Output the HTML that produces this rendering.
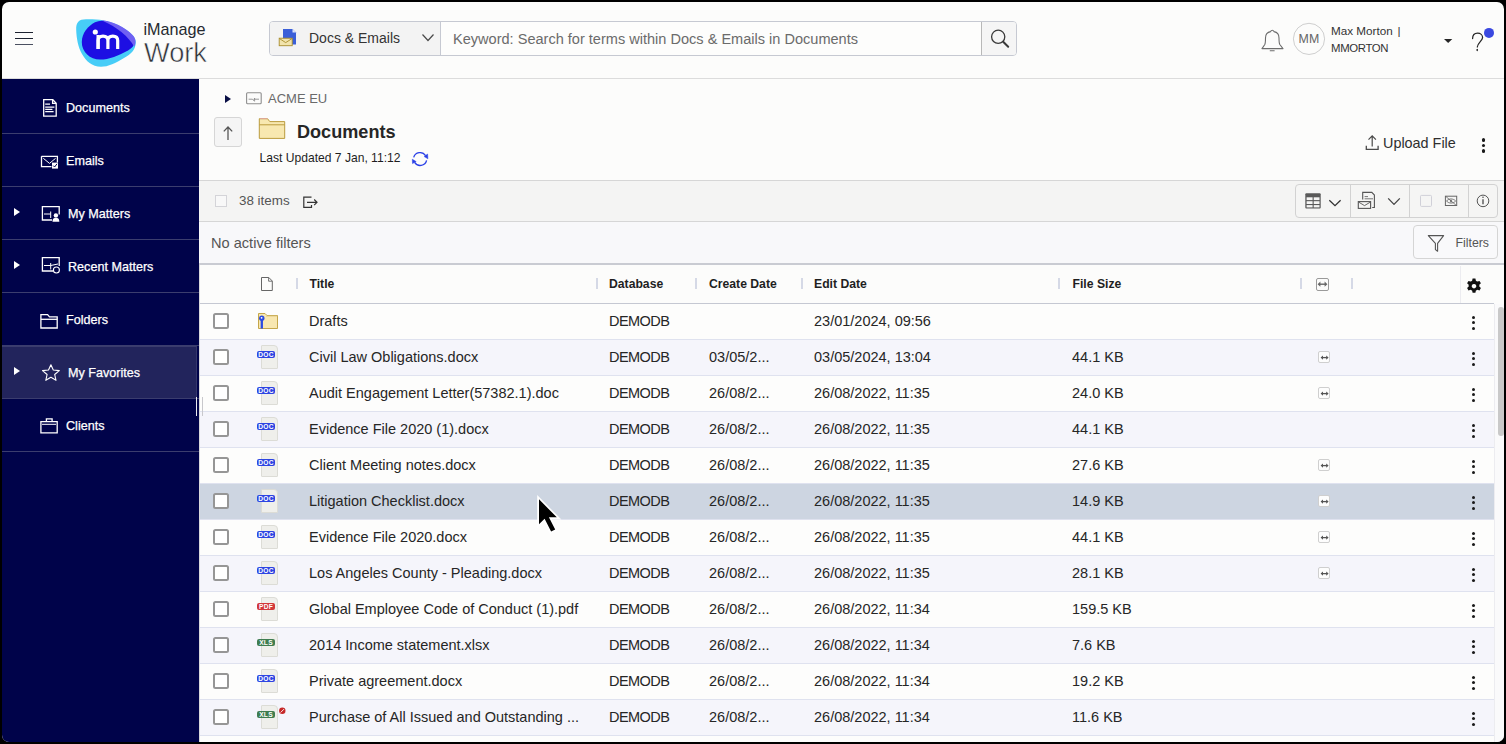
<!DOCTYPE html>
<html><head><meta charset="utf-8">
<style>
*{box-sizing:border-box;margin:0;padding:0}
html,body{width:1506px;height:744px;overflow:hidden;background:#000}
body{font-family:"Liberation Sans",sans-serif;color:#262626;position:relative}
.app{position:absolute;left:2px;top:2px;width:1502px;height:740px;background:#fcfcfb;border-radius:7px;overflow:hidden}
.pg{position:absolute;left:-2px;top:-2px;width:1506px;height:744px}
.a{position:absolute;white-space:nowrap}
svg{position:absolute;overflow:visible}
.hdrline{position:absolute;left:0;top:78px;width:1506px;height:1px;background:#dcdcdc}
.side{position:absolute;left:0;top:79px;width:199px;height:665px;background:#00034a}
.nav{position:absolute;left:0;width:199px;height:53px;border-bottom:1px solid #3b3d6e;color:#fff;font-size:12.6px}
.nav .t{position:absolute;left:66px;top:0;line-height:53px;white-space:nowrap;-webkit-text-stroke:0.25px #fff}
.nav .tri{position:absolute;left:13.8px;top:21px;width:0;height:0;border-left:6.2px solid #fff;border-top:4.7px solid transparent;border-bottom:4.7px solid transparent}
.sel{background:#22245c}
.row{position:absolute;left:200px;width:1294px;height:36px;border-bottom:1px solid #dfe2ef;background:#fdfdfc}
.row.alt{background:#f5f5fb}
.row.hov{background:#cdd5e1}
.row .cb{position:absolute;left:13.2px;top:9.2px;width:15.6px;height:15.6px;border:2px solid #969696;border-radius:2.5px;background:#fff}
.row .pgic{position:absolute;left:60.5px;top:5.3px;width:17.5px;height:23.3px;background:#efefeb;border:1px solid #dcdcd6;border-radius:1px 4px 1px 1px}
.row .bdg{position:absolute;left:57px;top:10.5px;width:18px;height:7.6px;border-radius:2px;color:#fff;font-size:6.6px;font-weight:bold;line-height:7.6px;text-align:center;letter-spacing:0.3px}
.row .c{position:absolute;top:0;line-height:34px;font-size:14.5px;color:#262626;white-space:nowrap}
.t1{left:109px}.t2{left:409px}.t3{left:509px}.t4{left:614px}.t5{left:872px}
.row .sy{position:absolute;left:1118.3px;top:11.3px;width:11.4px;height:11.4px;border:1px solid #cfcfcf;border-radius:2px;background:#fdfdfd}
.row .sy svg{left:-1px;top:-1px}
.kb{position:absolute;left:1271.7px;top:11.5px;width:3.4px;height:15px}
.kb i{position:absolute;left:0;width:3.4px;height:3.4px;border-radius:50%;background:#1a1a1a}
.th{position:absolute;top:265px;font-size:12.2px;font-weight:bold;color:#1f1f1f;line-height:16px;white-space:nowrap}
.sep{position:absolute;top:278px;width:2px;height:11px;background:#d5d9e6}
</style></head><body>
<div class="app"><div class="pg">
  <!-- HEADER -->
  <div class="hdrline"></div>
  <div class="a" style="left:15px;top:31.5px;width:18px;height:1.4px;background:#1c2230"></div>
  <div class="a" style="left:15px;top:37.5px;width:18px;height:1.4px;background:#1c2230"></div>
  <div class="a" style="left:15px;top:43.5px;width:18px;height:1.4px;background:#4a5060"></div>
  <svg style="left:0;top:0" width="1" height="1">
    <path d="M76.2,30 C75.8,22 79,19.3 86,19.2 C97,19 108,20 118,25 C128,30 135.8,36 135.8,42 C135.8,50 131,54 124,58 C116,63 108,66.8 101,66.8 C92,66.8 86,61 82,54 C78,47 76.5,38 76.2,30 Z" fill="#47cdf7"/>
    <path d="M81.8,42 C81.8,33 88,26 95,22.2 C99,20.3 103,20.2 107,21.6 C118,26 130,35 133.6,42 C135,45 132,48 128,50.5 C119,55.5 109,59.6 100,59.6 C90,59.6 81.8,52 81.8,42 Z" fill="#1d0fe3"/>
    <path d="M101.5,20.3 C112,20.5 126,28 132.5,35 C136,38.5 136.4,43 134.2,46.8 C129,37 117,27 101.5,20.3 Z" fill="#7060f2"/>
    <circle cx="95.3" cy="32" r="2.6" fill="#fff"/>
    <path d="M98.1,49 V40.6 Q98.1,36.2 103,36.2 Q107.9,36.2 107.9,40.6 V49 M107.9,40.6 Q107.9,36.2 112.8,36.2 Q117.7,36.2 117.7,40.6 V49" stroke="#fff" stroke-width="3.2" fill="none"/>
    <path d="M98.1,49 V35" stroke="#fff" stroke-width="3.2"/>
  </svg>
  <div class="a" style="left:143.5px;top:19.2px;font-size:16.2px;line-height:20px;color:#262a30">iManage</div>
  <div class="a" style="left:144px;top:36.5px;font-size:27.2px;line-height:31px;color:#2d3036;-webkit-text-stroke:0.55px #fcfcfb">Work</div>
  <!-- search -->
  <div class="a" style="left:269px;top:21px;width:748px;height:35px;border:1px solid #c6c9d2;border-radius:4px;background:#fdfdfc"></div>
  <div class="a" style="left:270px;top:22px;width:171px;height:33px;background:#f3f3f3;border-right:1px solid #c6c9d2;border-radius:3px 0 0 3px"></div>
  <div class="a" style="left:981px;top:22px;width:35px;height:33px;background:#f5f5f5;border-left:1px solid #b8b8b8;border-radius:0 3px 3px 0"></div>
  <svg style="left:0;top:0" width="1" height="1">
    <path d="M283,29 H292.5 L296,32.5 V44.6 H283 Z" fill="#3b5fd8"/>
    <path d="M292.5,29 V32.5 H296 Z" fill="#dfe6fb"/>
    <rect x="279.2" y="38.2" width="13" height="7.5" fill="#f2e4ac" stroke="#a98d2c" stroke-width="0.9"/>
    <path d="M279.5,38.6 L285.7,42.6 L292,38.6" stroke="#a98d2c" stroke-width="0.9" fill="none"/>
    <path d="M422.5,34.5 L428,40.5 L433.5,34.5" stroke="#4a4a4a" stroke-width="1.2" fill="none"/>
    <circle cx="998.2" cy="36.8" r="6.6" stroke="#3a3a3a" stroke-width="1.3" fill="none"/>
    <path d="M1003.2,41.8 L1008.2,46.8" stroke="#3a3a3a" stroke-width="2" stroke-linecap="round"/>
  </svg>
  <div class="a" style="left:309px;top:29.5px;font-size:14px;line-height:17px;color:#333">Docs &amp; Emails</div>
  <div class="a" style="left:453px;top:30.5px;font-size:14.55px;line-height:17px;color:#6b6b6b">Keyword: Search for terms within Docs &amp; Emails in Documents</div>
  <svg style="left:0;top:0" width="1" height="1">
    <path d="M1262,48.6 H1283 L1279.8,44.5 C1279,43 1279,41 1279,38 C1279,34 1276.5,32 1274,31.6 C1273.5,30.6 1273,30.3 1272.3,30.3 C1271.6,30.3 1271,30.6 1270.6,31.6 C1268,32 1265.5,34 1265.5,38 C1265.5,41 1265.5,43 1264.8,44.5 Z" stroke="#6d6d6d" stroke-width="1.1" fill="none" stroke-linejoin="round"/>
    <path d="M1269.8,50.8 H1274.6" stroke="#6d6d6d" stroke-width="1.1"/>
    <circle cx="1309" cy="38.9" r="15.6" stroke="#cfcfcf" stroke-width="1" fill="none"/>
    <path d="M1444,39 H1452.3 L1448.15,43 Z" fill="#262626"/>
    <path d="M1472.6,38.6 C1472.6,35 1475,33.2 1477.6,33.2 C1480.4,33.2 1482.6,35.2 1482.6,37.6 C1482.6,40.5 1477.4,43 1477.3,47" stroke="#262626" stroke-width="1.25" fill="none" stroke-linecap="round"/>
    <path d="M1477.2,49.4 V50.6" stroke="#262626" stroke-width="1.4" stroke-linecap="round"/>
    <circle cx="1489" cy="32.9" r="5" fill="#3a48e0"/>
  </svg>
  <div class="a" style="left:1298.6px;top:31.5px;font-size:12.37px;line-height:14px;color:#666">MM</div>
  <div class="a" style="left:1331px;top:23.8px;font-size:11.7px;line-height:14px;color:#333">Max Morton <span style="margin-left:1.5px">|</span></div>
  <div class="a" style="left:1331px;top:40.6px;font-size:11.4px;line-height:14px;color:#333;letter-spacing:-0.35px">MMORTON</div>

  <!-- SIDEBAR -->
  <div class="side">
    <div class="nav" style="top:0;height:55px"><span class="t" style="top:3px">Documents</span></div>
    <div class="nav" style="top:55px"><span class="t" style="top:0.5px">Emails</span></div>
    <div class="nav" style="top:108px"><span class="tri"></span><span class="t" style="left:68px;top:0.5px">My Matters</span></div>
    <div class="nav" style="top:161px"><span class="tri"></span><span class="t" style="left:68px;top:0.5px">Recent Matters</span></div>
    <div class="nav" style="top:214px"><span class="t" style="top:0.5px">Folders</span></div>
    <div class="nav" style="top:267px"><div style="position:absolute;left:0;top:0;width:197px;height:52px;background:#22245c;border-top:1px solid #3a3c6e;border-right:1px solid #34366a"></div><span class="tri"></span><span class="t" style="left:68px;top:0.5px">My Favorites</span></div>
    <div style="position:absolute;left:196px;top:317.5px;width:1.3px;height:19.5px;background:#e8e8ee"></div>
    <div class="nav" style="top:320px"><span class="t" style="top:0.5px">Clients</span></div>
  </div>
  <!-- sidebar icons (page coords) -->
  <svg style="left:0;top:0" width="1" height="1" fill="none" stroke="#fff" stroke-width="1.3">
    <path d="M43.7,99.7 H52.8 L56.2,103.3 V116.2 H43.7 Z"/>
    <path d="M52.6,100 V103.4 H56"/>
    <path d="M45.2,104.2 H50 M45.2,107.2 H54.4 M45.2,109.4 H52.4 M45.2,111.7 H53.6"/>
    <path d="M41.5,156.3 H57.4 V162.5 M51.5,166.6 H41.5 V156.3"/>
    <path d="M43.3,158.3 L49.5,163.4 L55.6,158.3" stroke-width="1"/>
    <rect x="52" y="162.6" width="6" height="6" fill="#fff" stroke="none"/>
    <path d="M53.2,165.6 L54.6,167 L57,163.8" stroke="#00034a" stroke-width="1"/>
    <path d="M52,220 H42.4 V206.7 H59.2 V214.5"/>
    <path d="M44,214 H50.7 M50.7,211.5 V218" stroke-width="1"/>
    <path d="M52.5,221.8 C52.5,218.5 54,217.8 55.9,217.8 C57.8,217.8 59.3,218.5 59.3,221.8 Z" fill="#fff" stroke="none"/>
    <circle cx="55.9" cy="215.4" r="2.2" fill="#fff" stroke="none"/>
    <path d="M53,271 H42.4 V257.7 H59.2 V266"/>
    <path d="M44,265.5 H50.7 M50.7,263 V269.5 M50.7,265.5 L58,264" stroke-width="1"/>
    <circle cx="56.4" cy="270" r="3" stroke-width="1.1"/>
    <path d="M40.9,328 V314.6 H47.6 L49.5,316.8 H57.2 V328 Z"/>
    <path d="M40.9,319.3 H57.2"/>
    <path d="M43,365.2 L45.5,370.1 L51,370.8 L47,374.6 L48,380 L43,377.4" transform="translate(7.5,0)" stroke="none"/>
    <path d="M50.9,364.8 L53.3,370 L59.3,370.6 L54.7,374.5 L56,380.3 L50.9,377.3 L45.8,380.3 L47.1,374.5 L42.5,370.6 L48.5,370 Z" stroke-width="1.1" stroke-linejoin="round"/>
    <path d="M40.9,421.7 H57.2 V432.8 H40.9 Z"/>
    <path d="M46.4,421.5 V418.9 H52.1 V421.5" />
    <path d="M42,424.3 H56" stroke-width="1"/>
  </svg>

  <!-- CONTENT TOP -->
  <div class="a" style="left:224.5px;top:94.5px;width:0;height:0;border-left:6px solid #0a0f45;border-top:4.5px solid transparent;border-bottom:4.5px solid transparent"></div>
  <svg style="left:0;top:0" width="1" height="1" fill="none">
    <rect x="246.6" y="92.7" width="14.6" height="11" rx="1" stroke="#8e8e8e" stroke-width="1.1"/>
    <path d="M248.6,99.2 H252.5 L253.7,100.6 L254.6,98 V101.5 M254.6,99.2 H259" stroke="#8e8e8e" stroke-width="0.9"/>
  </svg>
  <div class="a" style="left:268px;top:91.2px;font-size:13px;line-height:16px;color:#6a6a6a">ACME EU</div>
  <div class="a" style="left:214px;top:117px;width:28px;height:30px;border:1px solid #d6d6d6;border-radius:3px;background:#f5f5f5"></div>
  <svg style="left:0;top:0" width="1" height="1" fill="none">
    <path d="M228,127 V140 M223.8,131.4 L228,127 L232.2,131.4" stroke="#555" stroke-width="1.3"/>
    <path d="M259.3,138.4 V118.7 H267.5 L269.8,121.6 H284.7 V138.4 Z" fill="#f8e8b0" stroke="#bb9c3e" stroke-width="1"/>
    <path d="M259.3,124.8 H284.7" stroke="#bb9c3e" stroke-width="1"/>
    <path d="M260,118.7 H267.3" stroke="#e2a8a0" stroke-width="1"/>
  </svg>
  <div class="a" style="left:297px;top:121.7px;font-size:18.1px;line-height:20px;font-weight:bold;color:#262626">Documents</div>
  <div class="a" style="left:259.5px;top:150.5px;font-size:12.1px;line-height:14px;color:#1e1e1e">Last Updated 7 Jan, 11:12</div>
  <svg style="left:0;top:0" width="1" height="1" fill="none" stroke="#2a40e6" stroke-width="1.35">
    <path d="M413.7,157.4 A6.6,6.6 0 0 1 425.6,155.6"/>
    <path d="M426.6,160.4 A6.6,6.6 0 0 1 414.6,162.4"/>
    <path d="M427.6,154 L427.9,158.8 L424.2,156.6 Z M412.3,159.2 L412.5,163.6 L416.2,161.6 Z" fill="#2a40e6" stroke-width="0.5"/>
  </svg>
  <svg style="left:0;top:0" width="1" height="1" fill="none" stroke="#4a4a4a" stroke-width="1.2">
    <path d="M1372.2,136 V146.5 M1368.5,139.6 L1372.2,135.8 L1375.9,139.6"/>
    <path d="M1366.3,145.8 V149.3 H1378.1 V145.8" stroke-width="1.3"/>
  </svg>
  <div class="a" style="left:1383px;top:134.5px;font-size:14.4px;line-height:17px;color:#2e2e2e">Upload File</div>
  <div class="kb" style="left:1481.8px;top:138.4px"><i style="top:0"></i><i style="top:5.6px"></i><i style="top:11px"></i></div>

  <!-- TOOLBAR -->
  <div class="a" style="left:199px;top:180px;width:1307px;height:42px;background:#f4f4f3;border-top:1px solid #d6d6d6;border-bottom:1px solid #d6d6d6"></div>
  <div class="a" style="left:215.3px;top:195.2px;width:11.8px;height:11.8px;border:1px solid #d4d4d8;background:#f8f8f8"></div>
  <div class="a" style="left:239px;top:193px;font-size:13.4px;line-height:16px;color:#555">38 items</div>
  <svg style="left:0;top:0" width="1" height="1" fill="none" stroke="#333" stroke-width="1.2">
    <path d="M311.5,197.2 H303.8 V207.4 H311.5 V205"/>
    <path d="M307,202.3 H317 M314.2,199.5 L317,202.3 L314.2,205.1"/>
  </svg>
  <div class="a" style="left:1295px;top:184px;width:203px;height:34px;border:1px solid #d2d2d2;border-radius:4px;background:#f5f5f4"></div>
  <div class="a" style="left:1350px;top:185px;width:1px;height:32px;background:#d2d2d2"></div>
  <div class="a" style="left:1409px;top:185px;width:1px;height:32px;background:#d2d2d2"></div>
  <div class="a" style="left:1468px;top:185px;width:1px;height:32px;background:#d2d2d2"></div>
  <svg style="left:0;top:0" width="1" height="1" fill="none">
    <rect x="1305.3" y="193.3" width="15.4" height="15.2" rx="1" fill="#5a5a5a"/>
    <rect x="1306.6" y="197.3" width="6" height="2.8" fill="#f5f5f4"/><rect x="1313.7" y="197.3" width="5.8" height="2.8" fill="#f5f5f4"/>
    <rect x="1306.6" y="201.2" width="6" height="2.8" fill="#f5f5f4"/><rect x="1313.7" y="201.2" width="5.8" height="2.8" fill="#f5f5f4"/>
    <rect x="1306.6" y="205.1" width="6" height="2.3" fill="#f5f5f4"/><rect x="1313.7" y="205.1" width="5.8" height="2.3" fill="#f5f5f4"/>
    <path d="M1329.3,200.2 L1335,205.6 L1340.6,200.2" stroke="#333" stroke-width="1.3"/>
    <path d="M1362.7,199.5 V192.4 H1371.8 L1374.4,195 V207.5 H1372.2" stroke="#555" stroke-width="1.1"/>
    <path d="M1364.6,196.6 H1368 M1364.6,198.8 H1373" stroke="#777" stroke-width="1"/>
    <rect x="1358.3" y="201.6" width="12.3" height="6.8" fill="#f5f5f4" stroke="#555" stroke-width="1.1"/>
    <path d="M1358.8,202.2 L1364.5,205.6 L1370.2,202.2" stroke="#555" stroke-width="0.9"/>
    <path d="M1388.2,198.4 L1394,204.4 L1399.8,198.4" stroke="#444" stroke-width="1.3"/>
    <rect x="1420.5" y="195.4" width="11" height="11" rx="1" stroke="#d0d0d8" stroke-width="1"/>
    <rect x="1445.4" y="196.2" width="11.3" height="9.3" stroke="#666" stroke-width="1"/>
    <path d="M1446.5,201 C1448.5,198.3 1453.5,198.3 1455.6,201 C1453.5,203.7 1448.5,203.7 1446.5,201 Z" stroke="#666" stroke-width="0.9"/>
    <circle cx="1451" cy="201" r="1.1" fill="#666"/>
    <path d="M1446,196.6 L1456,205.2" stroke="#666" stroke-width="0.8"/>
    <circle cx="1483" cy="200.9" r="5.8" stroke="#555" stroke-width="1"/>
    <path d="M1483,199.3 V204.3" stroke="#555" stroke-width="1.4"/>
    <circle cx="1483" cy="197.2" r="0.8" fill="#555"/>
  </svg>

  <!-- FILTER BAR -->
  <div class="a" style="left:199px;top:222px;width:1307px;height:42px;background:#f8f8fa"></div>
  <div class="a" style="left:199px;top:263px;width:1307px;height:2px;background:#c9cbd2"></div>
  <div class="a" style="left:211px;top:234.5px;font-size:14.6px;line-height:17px;color:#555">No active filters</div>
  <div class="a" style="left:1413px;top:225px;width:85px;height:34px;border:1px solid #d5d5d5;border-radius:4px;background:#f9f9fb"></div>
  <svg style="left:0;top:0" width="1" height="1" fill="none">
    <path d="M1428.3,235.6 H1443.6 L1437.6,243.4 V251.2 L1435.4,249.6 V243.4 Z" stroke="#555" stroke-width="1.1" stroke-linejoin="round"/>
  </svg>
  <div class="a" style="left:1455.5px;top:234.5px;font-size:12.3px;line-height:16px;color:#555">Filters</div>

  <!-- TABLE HEADER -->
  <div class="a" style="left:199px;top:265px;width:1px;height:479px;background:#d8d8dc"></div>
  <div class="a" style="left:200px;top:303px;width:1294px;height:1px;background:#c5c8d2"></div>
  <div class="a" style="left:1460px;top:266px;width:1px;height:37px;background:#ececf0"></div>
  <svg style="left:0;top:0" width="1" height="1" fill="none">
    <path d="M261.5,277.5 H268.8 L272.3,281 V290.5 H261.5 Z" stroke="#666" stroke-width="1"/>
    <path d="M268.6,277.8 V281.2 H272" stroke="#666" stroke-width="0.9"/>
  </svg>
  <div class="sep" style="left:295.5px"></div>
  <div class="sep" style="left:595.5px"></div>
  <div class="sep" style="left:695px"></div>
  <div class="sep" style="left:800.5px"></div>
  <div class="sep" style="left:1058px"></div>
  <div class="sep" style="left:1300px"></div>
  <div class="sep" style="left:1350.5px"></div>
  <div class="th" style="left:309.5px;top:275.5px">Title</div>
  <div class="th" style="left:609px;top:275.5px">Database</div>
  <div class="th" style="left:709px;top:275.5px">Create Date</div>
  <div class="th" style="left:814px;top:275.5px">Edit Date</div>
  <div class="th" style="left:1072.5px;top:275.5px">File Size</div>
  <div class="a" style="left:1315.8px;top:277.8px;width:13px;height:12.8px;border:1.2px solid #9a9a9a;border-radius:2px"></div>
  <svg style="left:0;top:0" width="1" height="1">
    <path d="M1319,284.2 H1326" stroke="#666" stroke-width="1.4"/>
    <path d="M1317.6,284.2 L1320.4,281.6 V286.8 Z M1327.4,284.2 L1324.6,281.6 V286.8 Z" fill="#666"/>
  </svg>
  <svg style="left:0;top:0" width="1" height="1">
    <path fill="#111" fill-rule="evenodd" d="M1472.6,278.6 h2.8 l0.5,2.1 a5.6,5.6 0 0 1 1.5,0.9 l2.1,-0.7 l1.4,2.4 l-1.6,1.5 a5.6,5.6 0 0 1 0,1.7 l1.6,1.5 l-1.4,2.4 l-2.1,-0.7 a5.6,5.6 0 0 1 -1.5,0.9 l-0.5,2.1 h-2.8 l-0.5,-2.1 a5.6,5.6 0 0 1 -1.5,-0.9 l-2.1,0.7 l-1.4,-2.4 l1.6,-1.5 a5.6,5.6 0 0 1 0,-1.7 l-1.6,-1.5 l1.4,-2.4 l2.1,0.7 a5.6,5.6 0 0 1 1.5,-0.9 Z M1474,283.9 a2.3,2.3 0 1 0 0.01,0 Z"/>
  </svg>

  <!-- ROWS -->
  <div class="row" style="top:304px"><div class="cb"></div><svg style="left:0;top:0" width="1" height="1"><path d="M58.5,9.5 H65 L67,11.5 H77.5 V24.5 H58.5 Z" fill="#f8e7b0" stroke="#c4a64a" stroke-width="1"/><path d="M66,12 H77.5" stroke="#d9c27a" stroke-width="0.8"/><path d="M61.8,16 V24.6" stroke="#2b4be2" stroke-width="2.3"/><circle cx="61.8" cy="14.3" r="2.7" fill="#2b4be2"/><circle cx="61.6" cy="13.8" r="0.9" fill="#fff"/></svg><div class="c t1">Drafts</div><div class="c t2" style="letter-spacing:-0.55px">DEMODB</div><div class="c t4">23/01/2024, 09:56</div><div class="kb"><i style="top:0"></i><i style="top:5.6px"></i><i style="top:11.3px"></i></div></div>
<div class="row alt" style="top:340px"><div class="cb"></div><div class="pgic"></div><div class="bdg" style="background:#2d45e2">DOC</div><div class="c t1">Civil Law Obligations.docx</div><div class="c t2" style="letter-spacing:-0.55px">DEMODB</div><div class="c t3">03/05/2...</div><div class="c t4">03/05/2024, 13:04</div><div class="c t5">44.1 KB</div><div class="sy"><svg style="left:0;top:0" width="1" height="1"><path d="M2.6,5.6 H8.6" stroke="#555" stroke-width="1.3"/><path d="M1.6,5.6 L4,3.4 V7.8 Z M9.6,5.6 L7.2,3.4 V7.8 Z" fill="#555"/></svg></div><div class="kb"><i style="top:0"></i><i style="top:5.6px"></i><i style="top:11.3px"></i></div></div>
<div class="row" style="top:376px"><div class="cb"></div><div class="pgic"></div><div class="bdg" style="background:#2d45e2">DOC</div><div class="c t1">Audit Engagement Letter(57382.1).doc</div><div class="c t2" style="letter-spacing:-0.55px">DEMODB</div><div class="c t3">26/08/2...</div><div class="c t4">26/08/2022, 11:35</div><div class="c t5">24.0 KB</div><div class="sy"><svg style="left:0;top:0" width="1" height="1"><path d="M2.6,5.6 H8.6" stroke="#555" stroke-width="1.3"/><path d="M1.6,5.6 L4,3.4 V7.8 Z M9.6,5.6 L7.2,3.4 V7.8 Z" fill="#555"/></svg></div><div class="kb"><i style="top:0"></i><i style="top:5.6px"></i><i style="top:11.3px"></i></div></div>
<div class="row alt" style="top:412px"><div class="cb"></div><div class="pgic"></div><div class="bdg" style="background:#2d45e2">DOC</div><div class="c t1">Evidence File 2020 (1).docx</div><div class="c t2" style="letter-spacing:-0.55px">DEMODB</div><div class="c t3">26/08/2...</div><div class="c t4">26/08/2022, 11:35</div><div class="c t5">44.1 KB</div><div class="kb"><i style="top:0"></i><i style="top:5.6px"></i><i style="top:11.3px"></i></div></div>
<div class="row" style="top:448px"><div class="cb"></div><div class="pgic"></div><div class="bdg" style="background:#2d45e2">DOC</div><div class="c t1">Client Meeting notes.docx</div><div class="c t2" style="letter-spacing:-0.55px">DEMODB</div><div class="c t3">26/08/2...</div><div class="c t4">26/08/2022, 11:35</div><div class="c t5">27.6 KB</div><div class="sy"><svg style="left:0;top:0" width="1" height="1"><path d="M2.6,5.6 H8.6" stroke="#555" stroke-width="1.3"/><path d="M1.6,5.6 L4,3.4 V7.8 Z M9.6,5.6 L7.2,3.4 V7.8 Z" fill="#555"/></svg></div><div class="kb"><i style="top:0"></i><i style="top:5.6px"></i><i style="top:11.3px"></i></div></div>
<div class="row hov" style="top:484px"><div class="cb"></div><div class="pgic"></div><div class="bdg" style="background:#2d45e2">DOC</div><div class="c t1">Litigation Checklist.docx</div><div class="c t2" style="letter-spacing:-0.55px">DEMODB</div><div class="c t3">26/08/2...</div><div class="c t4">26/08/2022, 11:35</div><div class="c t5">14.9 KB</div><div class="sy"><svg style="left:0;top:0" width="1" height="1"><path d="M2.6,5.6 H8.6" stroke="#555" stroke-width="1.3"/><path d="M1.6,5.6 L4,3.4 V7.8 Z M9.6,5.6 L7.2,3.4 V7.8 Z" fill="#555"/></svg></div><div class="kb"><i style="top:0"></i><i style="top:5.6px"></i><i style="top:11.3px"></i></div></div>
<div class="row" style="top:520px"><div class="cb"></div><div class="pgic"></div><div class="bdg" style="background:#2d45e2">DOC</div><div class="c t1">Evidence File 2020.docx</div><div class="c t2" style="letter-spacing:-0.55px">DEMODB</div><div class="c t3">26/08/2...</div><div class="c t4">26/08/2022, 11:35</div><div class="c t5">44.1 KB</div><div class="sy"><svg style="left:0;top:0" width="1" height="1"><path d="M2.6,5.6 H8.6" stroke="#555" stroke-width="1.3"/><path d="M1.6,5.6 L4,3.4 V7.8 Z M9.6,5.6 L7.2,3.4 V7.8 Z" fill="#555"/></svg></div><div class="kb"><i style="top:0"></i><i style="top:5.6px"></i><i style="top:11.3px"></i></div></div>
<div class="row alt" style="top:556px"><div class="cb"></div><div class="pgic"></div><div class="bdg" style="background:#2d45e2">DOC</div><div class="c t1">Los Angeles County - Pleading.docx</div><div class="c t2" style="letter-spacing:-0.55px">DEMODB</div><div class="c t3">26/08/2...</div><div class="c t4">26/08/2022, 11:35</div><div class="c t5">28.1 KB</div><div class="sy"><svg style="left:0;top:0" width="1" height="1"><path d="M2.6,5.6 H8.6" stroke="#555" stroke-width="1.3"/><path d="M1.6,5.6 L4,3.4 V7.8 Z M9.6,5.6 L7.2,3.4 V7.8 Z" fill="#555"/></svg></div><div class="kb"><i style="top:0"></i><i style="top:5.6px"></i><i style="top:11.3px"></i></div></div>
<div class="row" style="top:592px"><div class="cb"></div><div class="pgic"></div><div class="bdg" style="background:#d2383a">PDF</div><div class="c t1">Global Employee Code of Conduct (1).pdf</div><div class="c t2" style="letter-spacing:-0.55px">DEMODB</div><div class="c t3">26/08/2...</div><div class="c t4">26/08/2022, 11:34</div><div class="c t5">159.5 KB</div><div class="kb"><i style="top:0"></i><i style="top:5.6px"></i><i style="top:11.3px"></i></div></div>
<div class="row alt" style="top:628px"><div class="cb"></div><div class="pgic"></div><div class="bdg" style="background:#3f7d50">XLS</div><div class="c t1">2014 Income statement.xlsx</div><div class="c t2" style="letter-spacing:-0.55px">DEMODB</div><div class="c t3">26/08/2...</div><div class="c t4">26/08/2022, 11:34</div><div class="c t5">7.6 KB</div><div class="kb"><i style="top:0"></i><i style="top:5.6px"></i><i style="top:11.3px"></i></div></div>
<div class="row" style="top:664px"><div class="cb"></div><div class="pgic"></div><div class="bdg" style="background:#2d45e2">DOC</div><div class="c t1">Private agreement.docx</div><div class="c t2" style="letter-spacing:-0.55px">DEMODB</div><div class="c t3">26/08/2...</div><div class="c t4">26/08/2022, 11:34</div><div class="c t5">19.2 KB</div><div class="kb"><i style="top:0"></i><i style="top:5.6px"></i><i style="top:11.3px"></i></div></div>
<div class="row alt" style="top:700px"><div class="cb"></div><div class="pgic"></div><div class="bdg" style="background:#3f7d50">XLS</div><svg style="left:0;top:0" width="1" height="1"><circle cx="82.3" cy="10.8" r="3.2" fill="#c62828"/><path d="M80.6,12.5 L84,9.1" stroke="#fff" stroke-width="0.9"/></svg><div class="c t1">Purchase of All Issued and Outstanding ...</div><div class="c t2" style="letter-spacing:-0.55px">DEMODB</div><div class="c t3">26/08/2...</div><div class="c t4">26/08/2022, 11:34</div><div class="c t5">11.6 KB</div><div class="kb"><i style="top:0"></i><i style="top:5.6px"></i><i style="top:11.3px"></i></div></div>
<div class="row" style="top:736px"><div class="pgic" style="top:6px"></div></div>

  <div class="a" style="left:202px;top:396.5px;width:1px;height:19.5px;background:#c8c8cc"></div>
  <!-- scrollbar -->
  <div class="a" style="left:1494px;top:304px;width:10px;height:440px;background:#fafafb;border-left:1px solid #ececf0"></div>
  <div class="a" style="left:1497.8px;top:306.8px;width:6px;height:129px;border-radius:3px;background:#c9c9c9"></div>

  <!-- cursor -->
  <svg style="left:0;top:0" width="1" height="1">
    <path d="M537.2,495 V528.6 L544,522.2 L550,534 L557.6,530.6 L551.8,519.6 L561.4,519.6 Z" fill="#fff"/><path d="M539,499.3 V524.3 L544.6,518.8 L551.1,531.4 L555.2,529.4 L548.9,517.3 L556.8,517.3 Z" fill="#000"/>
  </svg>
</div></div>
</body></html>
